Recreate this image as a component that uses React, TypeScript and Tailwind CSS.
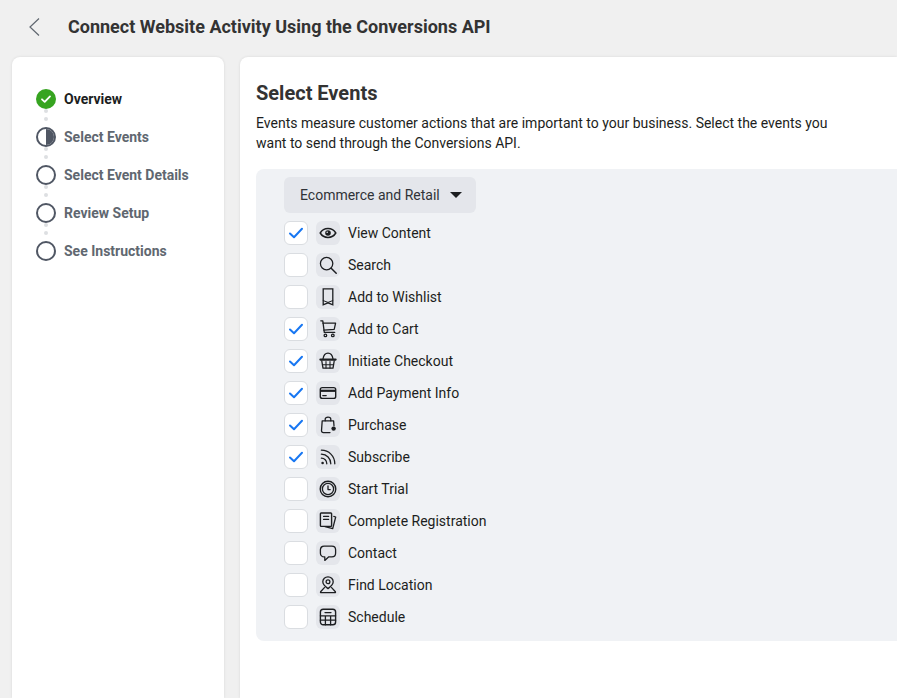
import React from 'react';

const S = ({ children }: { children: React.ReactNode }) => (
  <svg width="20" height="20" viewBox="0 0 20 20" fill="none" stroke="#1c1e21" strokeWidth="1.3" strokeLinecap="round" strokeLinejoin="round">
    {children}
  </svg>
);

const icons: Record<string, React.ReactNode> = {
  eye: (
    <S>
      <path d="M2.2 10C4 7 6.8 5.6 10 5.6S16 7 17.8 10C16 13 13.2 14.4 10 14.4S4 13 2.2 10z" strokeWidth="1.5" />
      <circle cx="10" cy="10" r="2.8" fill="#1c1e21" stroke="none" />
      <circle cx="9.2" cy="9.2" r="0.8" fill="#e4e6eb" stroke="none" />
    </S>
  ),
  search: (
    <S>
      <circle cx="8.6" cy="8.6" r="6.2" />
      <path d="M13.2 13.2l5 5" strokeWidth="1.5" />
    </S>
  ),
  bookmark: (
    <S>
      <path d="M5.2 1.8h9.6v16l-4.8-2-4.8 2z" strokeLinejoin="miter" />
      <path d="M5.2 13.6l4.8 1.8 4.8-1.8" strokeWidth="1" />
    </S>
  ),
  cart: (
    <S>
      <path d="M2.8 1.8h2l1.5 11.6h10.4" />
      <path d="M5 4.2h12.6l-1.4 6.2-10.3.8" />
      <circle cx="7.4" cy="16.4" r="1.3" />
      <circle cx="14.8" cy="16.4" r="1.3" />
    </S>
  ),
  basket: (
    <S>
      <path d="M5 8C5.6 4.4 7.6 2.2 10 2.2S14.4 4.4 15 8" />
      <path d="M2.4 8.6h15.2" strokeWidth="2.2" />
      <path d="M3.8 10l1.2 7.2h10L16.2 10" />
      <path d="M8 10.5v6.5M12 10.5v6.5M4.4 13.8h11.2" strokeWidth="1.1" />
    </S>
  ),
  card: (
    <S>
      <rect x="2.3" y="4.6" width="15.4" height="10.8" rx="2" strokeWidth="1.4" />
      <path d="M2.3 7.8h15.4" strokeWidth="2.2" strokeLinecap="butt" />
      <path d="M4.8 12.6h3.4" />
    </S>
  ),
  bag: (
    <S>
      <path d="M7.2 5.8V4.2c0-1.3 1.1-2 2.8-2s2.8.7 2.8 2v1.6" />
      <path d="M12 17.6H5.4c-1.2 0-2-.8-1.9-2L4.2 5.8h11.4l.4 5" />
      <circle cx="15.6" cy="13.6" r="2.2" fill="#1c1e21" stroke="none" />
    </S>
  ),
  rss: (
    <S>
      <circle cx="4.6" cy="16" r="1.3" fill="#1c1e21" stroke="none" />
      <path d="M3.4 11.2c3 0 5.4 2.4 5.4 5.6" />
      <path d="M3.4 7.2c5.3 0 9.4 4.3 9.4 9.6" />
      <path d="M3.4 3.2c7.5 0 13.4 6 13.4 13.6" />
    </S>
  ),
  clock: (
    <S>
      <circle cx="10" cy="10" r="7.8" strokeWidth="1.4" />
      <circle cx="10" cy="10" r="5.6" />
      <path d="M10 6.8v3.8h2.2" />
    </S>
  ),
  forms: (
    <S>
      <rect x="2.4" y="2" width="11.2" height="13.4" rx="0.8" strokeWidth="1.4" />
      <path d="M5.6 5.4h5M5.6 8.4h5" />
      <path d="M15.8 5.4l1.9.6-3 11.6-7.6-2" />
    </S>
  ),
  chat: (
    <S>
      <path d="M6.2 3.2h7.6c2.2 0 3.8 1.5 3.8 3.6v3.4c0 2.1-1.6 3.6-3.8 3.6h-3L6.8 17.4v-3.5h-.6c-2.2 0-3.8-1.5-3.8-3.6V6.8c0-2.1 1.6-3.6 3.8-3.6z" />
    </S>
  ),
  pin: (
    <S>
      <path d="M10 13.6C7.2 11.6 4.8 9.4 4.8 6.8 4.8 4 7.1 1.8 10 1.8s5.2 2.2 5.2 5c0 2.6-2.4 4.8-5.2 6.8z" />
      <circle cx="10" cy="6.8" r="1.9" />
      <path d="M6.4 12.6l-3.8 4.2c-.3.4 0 .8.4.8h14c.4 0 .7-.4.4-.8l-3.8-4.2" />
    </S>
  ),
  table: (
    <S>
      <rect x="2.4" y="2.2" width="15.2" height="15.6" rx="2.8" strokeWidth="1.4" />
      <path d="M2.4 8.8h15.2M2.4 13.2h15.2M7.4 8.8v9M12.6 8.8v9M7 5.6h6" />
    </S>
  ),
};

const events = [
  { label: 'View Content', icon: 'eye', on: true },
  { label: 'Search', icon: 'search', on: false },
  { label: 'Add to Wishlist', icon: 'bookmark', on: false },
  { label: 'Add to Cart', icon: 'cart', on: true },
  { label: 'Initiate Checkout', icon: 'basket', on: true },
  { label: 'Add Payment Info', icon: 'card', on: true },
  { label: 'Purchase', icon: 'bag', on: true },
  { label: 'Subscribe', icon: 'rss', on: true },
  { label: 'Start Trial', icon: 'clock', on: false },
  { label: 'Complete Registration', icon: 'forms', on: false },
  { label: 'Contact', icon: 'chat', on: false },
  { label: 'Find Location', icon: 'pin', on: false },
  { label: 'Schedule', icon: 'table', on: false },
];

const steps = ['Overview', 'Select Events', 'Select Event Details', 'Review Setup', 'See Instructions'];

const StepIcon = ({ index }: { index: number }) => {
  if (index === 0) {
    return (
      <div className="flex h-5 w-5 items-center justify-center rounded-full bg-[#36a420]">
        <svg width="12" height="12" viewBox="0 0 12 12" fill="none" stroke="white" strokeWidth="1.8" strokeLinecap="round" strokeLinejoin="round">
          <path d="M2 6.3l2.7 2.6L10 3.4" />
        </svg>
      </div>
    );
  }
  if (index === 1) {
    return (
      <div className="flex h-5 w-5 justify-end overflow-hidden rounded-full border-2 border-[#505764] bg-white">
        <div className="h-full w-1/2 bg-[#505764]" />
      </div>
    );
  }
  return <div className="h-5 w-5 rounded-full border-2 border-[#505764] bg-white" />;
};

export default function App() {
  return (
    <div className="flex h-[698px] w-[897px] flex-col overflow-hidden bg-[#f0f0f0] font-['Roboto',sans-serif]">
      {/* Header */}
      <div className="flex h-[57px] shrink-0 items-center pb-[4px] pl-[28px]">
        <svg width="12" height="20" viewBox="0 0 12 20" fill="none" stroke="#606770" strokeWidth="1.2">
          <path d="M11 1.5L2 10l9 8.5" />
        </svg>
        <h1 className="ml-[28px] text-[18px] leading-6 font-bold text-[#333333]">Connect Website Activity Using the Conversions API</h1>
      </div>

      <div className="flex min-h-0 flex-1 gap-4 pl-3">
        {/* Steps */}
        <div className="w-[212px] shrink-0 rounded-t-lg bg-white pt-[23px] pl-6 shadow-[0_0_3px_rgba(0,0,0,0.1)]">
          {steps.map((step, i) => (
            <div key={step} className="relative flex h-[38px] items-center">
              {i < steps.length - 1 && (
                <div className="absolute top-[29px] left-[8px] flex flex-col gap-[4px]">
                  <div className="h-1 w-1 rounded-full bg-[#dddfe2]" />
                  <div className="h-1 w-1 rounded-full bg-[#dddfe2]" />
                </div>
              )}
              <StepIcon index={i} />
              <span className={`ml-2 text-[14px] font-bold ${i === 0 ? 'text-[#1c1e21]' : 'text-[#606770]'}`}>{step}</span>
            </div>
          ))}
        </div>

        {/* Main */}
        <div className="min-w-0 flex-1 rounded-tl-lg bg-white pt-[22px] pl-4 shadow-[0_0_3px_rgba(0,0,0,0.1)]">
          <h2 className="text-[20px] leading-7 font-bold text-[#333333]">Select Events</h2>
          <p className="mt-[6px] w-[600px] text-[14px] leading-5 text-[#1c1e21]">
            Events measure customer actions that are important to your business. Select the events you want to send through the Conversions API.
          </p>
          <div className="mt-4 rounded-l-lg bg-[#f0f2f5] pt-2 pb-2 pl-7">
            <div className="flex h-9 w-[192px] items-center justify-between rounded-md bg-[#e4e6eb] pr-[14px] pl-4">
              <span className="text-[14px] text-[#303338]">Ecommerce and Retail</span>
              <div className="h-0 w-0 border-x-[6px] border-t-[6px] border-x-transparent border-t-[#1c1e21]" />
            </div>
            <div className="mt-1">
              {events.map((ev) => (
                <div key={ev.label} className="flex h-8 items-center">
                  <div className="flex h-6 w-6 items-center justify-center rounded-md border border-[#dadde1] bg-white">
                    {ev.on && (
                      <svg width="16" height="16" viewBox="0 0 16 16" fill="none" stroke="#1877f2" strokeWidth="2" strokeLinecap="round" strokeLinejoin="round">
                        <path d="M2 8.5l4 3.7L14 3.8" />
                      </svg>
                    )}
                  </div>
                  <div className="ml-2 flex h-6 w-6 items-center justify-center rounded-md bg-[#e4e6eb]">{icons[ev.icon]}</div>
                  <span className="ml-2 text-[14px] text-[#1c1e21]">{ev.label}</span>
                </div>
              ))}
            </div>
          </div>
        </div>
      </div>
    </div>
  );
}
